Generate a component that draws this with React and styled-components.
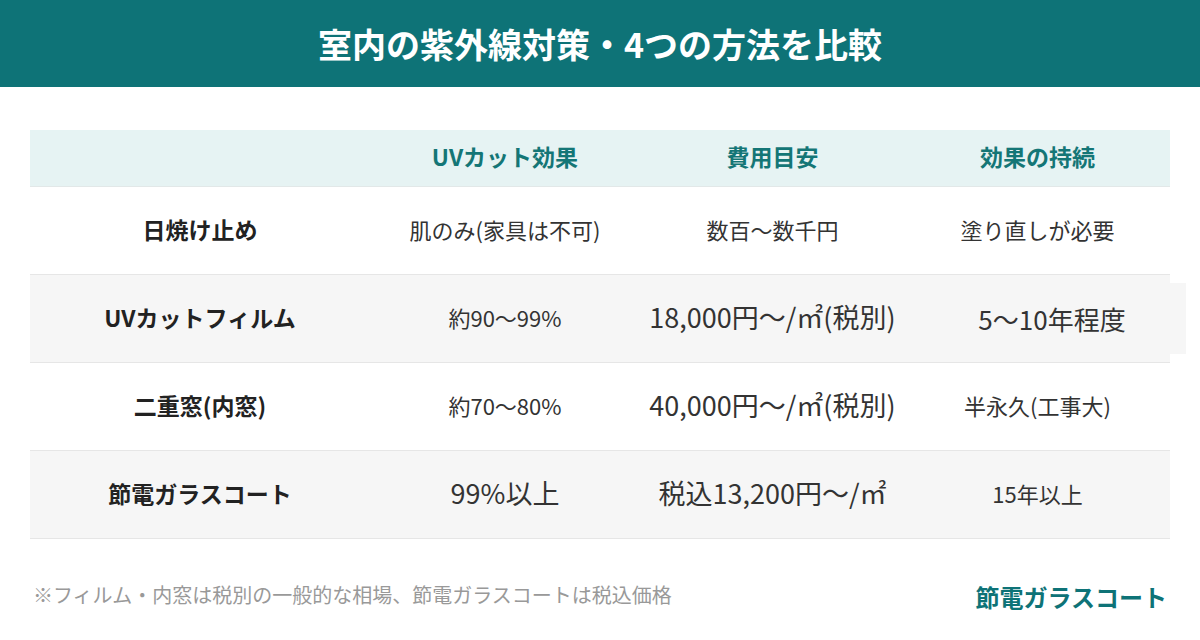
import React from "react";
import styled, { createGlobalStyle } from "styled-components";

const GlobalStyle = createGlobalStyle`
  html, body {
    margin: 0;
    padding: 0;
    background: #ffffff;
  }
  body {
    font-family: "Noto Sans CJK JP", "Noto Sans", sans-serif;
    width: 1200px;
    height: 640px;
    overflow: hidden;
  }
`;

const rows = [
  {
    name: "日焼け止め",
    cells: [
      { text: "肌のみ(家具は不可)" },
      { text: "数百～数千円" },
      { text: "塗り直しが必要" },
    ],
  },
  {
    name: "UVカットフィルム",
    cells: [
      { text: "約90～99%" },
      { text: "18,000円～/㎡(税別)", big: true },
      { text: "5～10年程度", big: true, spill: true },
    ],
  },
  {
    name: "二重窓(内窓)",
    cells: [
      { text: "約70～80%" },
      { text: "40,000円～/㎡(税別)", big: true },
      { text: "半永久(工事大)" },
    ],
  },
  {
    name: "節電ガラスコート",
    cells: [
      { text: "99%以上", big: true },
      { text: "税込13,200円～/㎡", big: true },
      { text: "15年以上" },
    ],
  },
];

const App = () => {
  return (
    <Page>
      <GlobalStyle />
      <TitleBar>
        <Title>室内の紫外線対策・4つの方法を比較</Title>
      </TitleBar>

      <Table>
        <HeadRow>
          <HeadCell />
          <HeadCell>UVカット効果</HeadCell>
          <HeadCell>費用目安</HeadCell>
          <HeadCell>効果の持続</HeadCell>
        </HeadRow>
        {rows.map((row, idx) => (
          <Row key={idx} $alt={idx % 2 === 1}>
            <NameCell>{row.name}</NameCell>
            {row.cells.map((cell, i) => (
              <Cell key={i}>
                {cell.spill ? (
                  <Spill $big={cell.big}>{cell.text}</Spill>
                ) : (
                  <Value $big={cell.big}>{cell.text}</Value>
                )}
              </Cell>
            ))}
          </Row>
        ))}
      </Table>

      <Footer>
        <Note>※フィルム・内窓は税別の一般的な相場、節電ガラスコートは税込価格</Note>
        <Brand>節電ガラスコート</Brand>
      </Footer>
    </Page>
  );
};

const Page = styled.div`
  width: 1200px;
  height: 640px;
  display: flex;
  flex-direction: column;
`;

const TitleBar = styled.header`
  height: 87px;
  background: #0e7377;
  display: flex;
  align-items: center;
  justify-content: center;
`;

const Title = styled.h1`
  margin: 0;
  color: #ffffff;
  font-size: 34px;
  font-weight: 700;
  letter-spacing: 0;
`;

const Table = styled.div`
  margin: 43px 30px 0;
  display: flex;
  flex-direction: column;
`;

const grid = `
  display: grid;
  grid-template-columns: 340px 270px 265px 265px;
`;

const HeadRow = styled.div`
  ${grid}
  height: 56px;
  background: #e6f3f3;
  border-bottom: 1px solid #e2e8e8;
`;

const HeadCell = styled.div`
  display: flex;
  align-items: center;
  justify-content: center;
  padding-bottom: 4px;
  color: #147676;
  font-size: 23px;
  font-weight: 700;
`;

const Row = styled.div`
  ${grid}
  height: 87px;
  background: ${(p) => (p.$alt ? "#f6f6f6" : "#ffffff")};
  border-bottom: 1px solid #e6e6e6;
`;

const NameCell = styled.div`
  display: flex;
  align-items: center;
  justify-content: center;
  padding-bottom: 4px;
  color: #222222;
  font-size: 23px;
  font-weight: 700;
`;

const Cell = styled.div`
  display: flex;
  align-items: center;
  justify-content: center;
  padding-bottom: 4px;
  color: #333333;
`;

const Value = styled.span`
  font-size: ${(p) => (p.$big ? "27px" : "22px")};
  white-space: nowrap;
`;

const Spill = styled.div`
  align-self: stretch;
  flex: 1;
  margin: 8px -16px 4px 13px;
  background: #f6f6f6;
  display: flex;
  align-items: center;
  justify-content: center;
  font-size: 26px;
  white-space: nowrap;
`;

const Footer = styled.div`
  margin: 36px 33px 0;
  display: flex;
  align-items: center;
  justify-content: space-between;
`;

const Note = styled.p`
  margin: 0;
  color: #999999;
  font-size: 20px;
`;

const Brand = styled.div`
  color: #0e7377;
  font-size: 24px;
  font-weight: 700;
  margin-top: 4px;
`;

export default App;
